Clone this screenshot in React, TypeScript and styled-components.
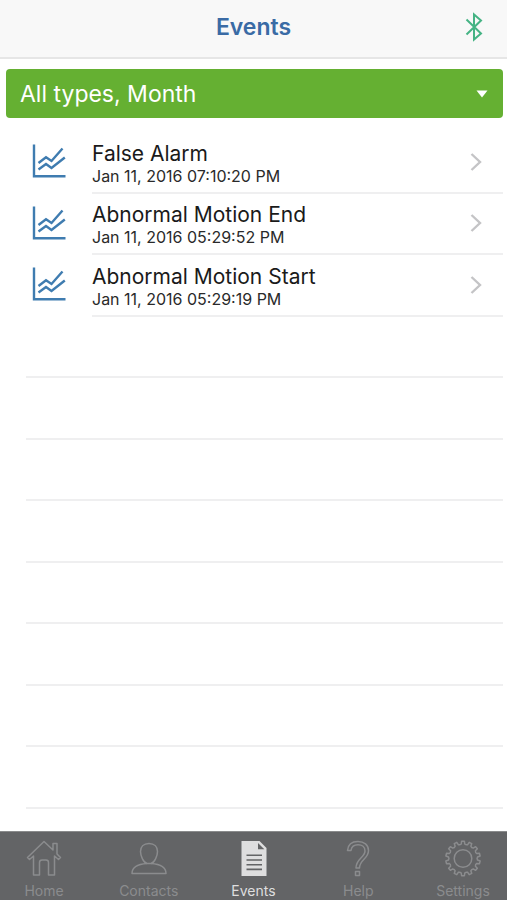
import React from "react";
import styled, { createGlobalStyle } from "styled-components";

const GlobalStyle = createGlobalStyle`
  * { box-sizing: border-box; }
  body { margin: 0; background: #fff; font-family: Inter, "Liberation Sans", sans-serif; }
`;

const Screen = styled.div`
  display: flex;
  flex-direction: column;
  min-height: 100vh;
`;

const Header = styled.header`
  display: grid;
  grid-template-columns: 1fr auto 1fr;
  align-items: center;
  height: 59px;
  padding: 0 24px 4px;
  background: #f8f8f8;
  border-bottom: 2px solid #e6e6e6;
`;

const Title = styled.h1`
  grid-column: 2;
  margin: 0;
  font-size: 23px;
  line-height: 28px;
  font-weight: 600;
  color: #3a6ba5;
`;

const PlainButton = styled.button`
  display: flex;
  padding: 0;
  border: 0;
  background: none;
  font: inherit;
  color: inherit;
  cursor: pointer;
`;

const BluetoothButton = styled(PlainButton)`
  justify-self: end;
  color: #45b384;
`;

const FilterButton = styled(PlainButton)`
  align-items: center;
  justify-content: space-between;
  height: 49px;
  margin: 10px 4px 14px 6px;
  padding: 0 15px 0 14px;
  border-radius: 4px;
  background: #65b032;
  color: #fff;
  font-size: 23px;
  line-height: 28px;
`;

const List = styled.ul`
  flex: 1;
  display: grid;
  grid-auto-rows: minmax(56px, 1fr);
  margin: 0;
  padding: 0 4px 22px 26px;
  list-style: none;
`;

const Row = styled.li`
  display: flex;
  border-bottom: 2px solid #efeff0;
`;

const EventItem = styled.li`
  display: flex;
`;

const EventButton = styled(PlainButton)`
  flex: 1;
  align-items: stretch;
  text-align: left;
`;

const ChartCell = styled.span`
  display: flex;
  align-items: center;
  width: 66px;
  padding: 0 0 3px 5px;
  color: #3f7cb0;
`;

const EventBody = styled.span`
  flex: 1;
  display: flex;
  align-items: center;
  justify-content: space-between;
  padding-right: 21px;
  border-bottom: 2px solid #efeff0;
  color: #c4c4c6;
`;

const EventText = styled.span`
  display: flex;
  flex-direction: column;
  padding-top: 4px;
`;

const EventName = styled.span`
  font-size: 21px;
  line-height: 24px;
  color: #1a1a1a;
`;

const EventTime = styled.time`
  font-size: 16px;
  line-height: 20px;
  color: #2a2a2a;
`;

const TabBar = styled.nav`
  display: flex;
  justify-content: space-between;
  height: 69px;
  padding: 0 8px;
  background: #636466;
  border-top: 1px solid #8a8b8c;
`;

const Tab = styled.a<{ $active?: boolean }>`
  display: flex;
  flex-direction: column;
  align-items: center;
  width: 72px;
  padding-top: 7px;
  gap: 6px;
  font-size: 14px;
  line-height: 16px;
  text-decoration: none;
  color: ${(p) => (p.$active ? "#dededf" : "#8b8c8e")};
`;

const ChartIcon = () => (
  <svg width="36" height="36" viewBox="0 0 36 36" fill="none" stroke="currentColor" strokeWidth="2.4" aria-hidden="true">
    <path d="M3 1.5V33.3H34.5" />
    <path d="M7.5 20L15 14.2L20.5 18L31.5 5.5" />
    <path d="M7.5 26.5L15 21L20.5 25L33.8 14.5" />
  </svg>
);

const ChevronIcon = () => (
  <svg width="12" height="20" viewBox="0 0 12 20" fill="none" stroke="currentColor" strokeWidth="2.4" aria-hidden="true">
    <path d="M1.5 2L10 10L1.5 18" />
  </svg>
);

const BluetoothIcon = () => (
  <svg width="18" height="30" viewBox="0 0 18 30" fill="none" stroke="currentColor" strokeWidth="2" aria-hidden="true">
    <path d="M1.5 7.5L16 21.5L9 27.5V2.5L16 8.5L1.5 22.5" />
  </svg>
);

const CaretIcon = () => (
  <svg width="12" height="8" viewBox="0 0 12 8" fill="currentColor" aria-hidden="true">
    <path d="M0.5 0.5H11.5L6 7.5Z" />
  </svg>
);

const TabSvg = ({ children }: { children: React.ReactNode }) => (
  <svg width="38" height="38" viewBox="0 0 38 38" fill="none" stroke="currentColor" strokeWidth="1.5" strokeLinejoin="round" aria-hidden="true">
    {children}
  </svg>
);

const HomeIcon = () => (
  <TabSvg>
    <path d="M19 2.5L2.5 18.5L4.5 20.5L8.5 17V36H14.5V23.5Q14.5 21 17 21H21Q23.5 21 23.5 23.5V36H29.5V17L33.5 20.5L35.5 18.5L32 15V4.5H28V11Z" />
  </TabSvg>
);

const ContactIcon = () => (
  <TabSvg>
    <path d="M19 4.5C13.5 4.5 10.5 8 10.5 12.5C10.5 17 13.5 23.5 17 24.5H21C24.5 23.5 27.5 17 27.5 12.5C27.5 8 24.5 4.5 19 4.5Z" />
    <path d="M17 24.5C9 25 2 27 2 34.5H36C36 27 29 25 21 24.5" />
  </TabSvg>
);

const DocumentIcon = () => (
  <TabSvg>
    <path d="M6.5 2H24.5L31.5 9V37H6.5Z" fill="currentColor" stroke="none" />
    <path d="M23 4V10.3H29.3Z" fill="#636466" stroke="none" />
    <path d="M11.5 16.3H27M11.5 21H27M11.5 25.7H27M11.5 30.4H27" stroke="#636466" strokeWidth="1.6" />
  </TabSvg>
);

const HelpIcon = () => (
  <TabSvg>
    <path d="M8.5 11.5C9 5.5 13 2.5 19 2.5C25 2.5 29.5 6 29.5 11.5C29.5 20 20.5 20.5 20.5 29H17C17 19.5 26 18.5 26 12C26 8 23 5.8 19 5.8C15 5.8 12.5 8 12 11.5Z" />
    <path d="M16.5 32.5H20.5V36.5H16.5Z" />
  </TabSvg>
);

const TEETH = 14;
const gearPath = Array.from({ length: TEETH }, (_, i) => {
  const at = (offset: number, radius: number) => {
    const angle = ((i + offset) / TEETH) * Math.PI * 2 - Math.PI / 2;
    return `${(19 + radius * Math.cos(angle)).toFixed(2)} ${(19.5 + radius * Math.sin(angle)).toFixed(2)}`;
  };
  return `${i ? "L" : "M"}${at(-0.27, 14.6)}L${at(-0.18, 17.3)}L${at(0.18, 17.3)}L${at(0.27, 14.6)}Q${at(0.5, 13.6)} ${at(0.73, 14.6)}`;
}).join("");

const GearIcon = () => (
  <TabSvg>
    <path d={`${gearPath}Z`} />
    <circle cx="19" cy="19.5" r="8.8" />
  </TabSvg>
);

const events = [
  { name: "False Alarm", time: "Jan 11, 2016 07:10:20 PM", iso: "2016-01-11T19:10:20" },
  { name: "Abnormal Motion End", time: "Jan 11, 2016 05:29:52 PM", iso: "2016-01-11T17:29:52" },
  { name: "Abnormal Motion Start", time: "Jan 11, 2016 05:29:19 PM", iso: "2016-01-11T17:29:19" },
];

const emptyRows = Array.from({ length: 8 }, (_, i) => i);

const tabs = [
  { label: "Home", Icon: HomeIcon },
  { label: "Contacts", Icon: ContactIcon },
  { label: "Events", Icon: DocumentIcon, active: true },
  { label: "Help", Icon: HelpIcon },
  { label: "Settings", Icon: GearIcon },
];

export default function App() {
  return (
    <Screen>
      <GlobalStyle />
      <Header>
        <Title>Events</Title>
        <BluetoothButton type="button" aria-label="Bluetooth">
          <BluetoothIcon />
        </BluetoothButton>
      </Header>
      <FilterButton type="button" aria-haspopup="listbox">
        All types, Month
        <CaretIcon />
      </FilterButton>
      <List>
        {events.map((event) => (
          <EventItem key={event.iso}>
            <EventButton type="button">
              <ChartCell>
                <ChartIcon />
              </ChartCell>
              <EventBody>
                <EventText>
                  <EventName>{event.name}</EventName>
                  <EventTime dateTime={event.iso}>{event.time}</EventTime>
                </EventText>
                <ChevronIcon />
              </EventBody>
            </EventButton>
          </EventItem>
        ))}
        {emptyRows.map((row) => (
          <Row key={row} aria-hidden="true" />
        ))}
      </List>
      <TabBar>
        {tabs.map(({ label, Icon, active }) => (
          <Tab key={label} href={`#${label.toLowerCase()}`} $active={active} aria-current={active ? "page" : undefined}>
            <Icon />
            {label}
          </Tab>
        ))}
      </TabBar>
    </Screen>
  );
}
